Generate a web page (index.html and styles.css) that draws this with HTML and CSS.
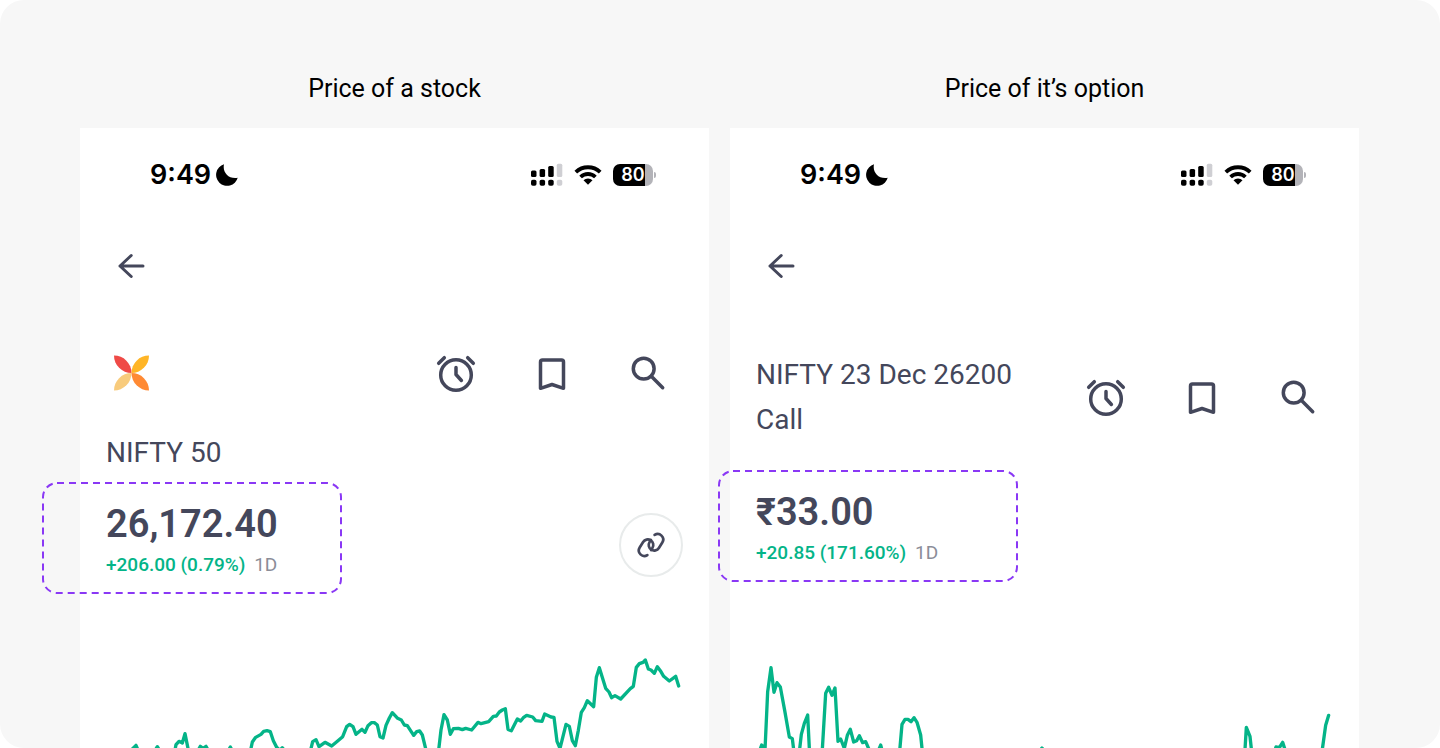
FILE: index.html
```html
<!DOCTYPE html>
<html lang="en">
<head>
	<meta charset="UTF-8" />
	<meta name="viewport" content="width=device-width, initial-scale=1" />
	<title>Stock price and option price</title>
	<link rel="stylesheet" href="styles.css">
</head>
<body>
	<!-- shared icons -->
	<svg class="sprite" aria-hidden="true">
		<symbol id="moon" viewBox="0 0 22 22">
			<path d="M8 .3C6.200 8 12.500 15.500 21.700 13.800A11 11 0 1 1 8 .3z" fill="#000" />
		</symbol>
		<symbol id="signal" viewBox="0 0 32 24">
			<g fill="#000">
				<rect x="0" y="7.500" width="5.500" height="6.500" rx="1.500" />
				<rect x="8.600" y="6" width="5.500" height="8" rx="1.500" />
				<rect x="17.200" y="3" width="5.500" height="11" rx="1.500" />
				<rect x="0" y="16.800" width="5.500" height="6" rx="1.800" />
				<rect x="8.600" y="16.800" width="5.500" height="6" rx="1.800" />
				<rect x="17.200" y="16.800" width="5.500" height="6" rx="1.800" />
			</g>
			<g fill="#cfcfd3">
				<rect x="25.800" y=".8" width="5.500" height="13.200" rx="1.500" />
				<rect x="25.800" y="16.800" width="5.500" height="6" rx="1.800" />
			</g>
		</symbol>
		<symbol id="wifi" viewBox="0 0 28 22">
			<path d="M1.800 8.200A17.500 17.500 0 0 1 26.200 8.200M6.600 13A10.600 10.600 0 0 1 21.400 13" fill="none" stroke="#000" stroke-width="3.800" />
			<path d="M14 20.800L9.500 16.200A6.600 6.600 0 0 1 18.500 16.200z" fill="#000" />
		</symbol>
		<symbol id="back" viewBox="0 0 50 40">
			<path d="M37 20H14M25.200 9.500L14 20L25.200 30.500" />
		</symbol>
		<symbol id="alarm" viewBox="0 0 48 42">
			<circle cx="24" cy="23" r="15.300" />
			<path d="M24 15.500V22.500L29.400 28.500M6.700 11.300L12.300 5.700M41.300 11.300L35.700 5.700" />
		</symbol>
		<symbol id="bookmark" viewBox="0 0 48 42">
			<path d="M14.500 8H33.500Q35.500 8 35.500 10V36.300L24 32.500L12.500 36.300V10Q12.500 8 14.500 8z" />
		</symbol>
		<symbol id="search" viewBox="0 0 48 42">
			<circle cx="19.700" cy="16.700" r="10.400" />
			<path d="M27.300 24.300L38.700 35.700" />
		</symbol>
	</svg>

	<main class="page">
		<!-- stock -->
		<figure class="column">
			<figcaption class="caption">Price of a stock</figcaption>
			<div class="screen">
				<div class="status">
					<span class="time">9:49</span>
					<svg class="moon"><use href="#moon" /></svg>
					<svg class="signal"><use href="#signal" /></svg>
					<svg class="wifi"><use href="#wifi" /></svg>
					<span class="battery">80</span>
				</div>
				<button class="back" type="button" aria-label="Back"><svg class="icon"><use href="#back" /></svg></button>
				<div class="toolbar">
					<svg class="logo" viewBox="0 0 50 36">
						<path d="M8 .5A17.500 17.500 0 0 1 25.500 18A17.500 17.500 0 0 1 8 .5z" fill="#ef4a47" />
						<path d="M43 .5A17.500 17.500 0 0 1 25.500 18A17.500 17.500 0 0 1 43 .5z" fill="#ffb526" />
						<path d="M8 35.500A17.500 17.500 0 0 1 25.500 18A17.500 17.500 0 0 1 8 35.500z" fill="#f8cb7c" />
						<path d="M43 35.500A17.500 17.500 0 0 1 25.500 18A17.500 17.500 0 0 1 43 35.500z" fill="#ff8a34" />
					</svg>
					<div class="actions">
						<button class="action" type="button" aria-label="Set alert"><svg class="icon"><use href="#alarm" /></svg></button>
						<button class="action" type="button" aria-label="Save"><svg class="icon"><use href="#bookmark" /></svg></button>
						<button class="action" type="button" aria-label="Search"><svg class="icon"><use href="#search" /></svg></button>
					</div>
				</div>
				<h2 class="name name-below">NIFTY 50</h2>
				<div class="quote">
					<div class="price">
						<svg class="marker marker-wide"><rect x="1" y="1" width="298" height="110" rx="14" /></svg>
						<p class="value">26,172.40</p>
						<p class="change">+206.00 (0.79%) <span class="period">1D</span></p>
					</div>
					<button class="chain" type="button" aria-label="Option chain">
						<svg class="chain-icon" viewBox="-16 -16 32 32">
							<g transform="translate(-4.800 2.500) rotate(32)"><path d="M5.500 -.5V-3A5.500 5.500 0 0 0 -5.500 -3V3.500A5.500 5.500 0 0 0 5 5.800" /></g>
							<g transform="translate(4.800 -2.500) rotate(212)"><path d="M5.500 -.5V-3A5.500 5.500 0 0 0 -5.500 -3V3.500A5.500 5.500 0 0 0 5 5.800" /></g>
						</svg>
					</button>
				</div>
				<svg class="chart" viewBox="0 0 1887 324">
					<polyline points="154,330 168,316 174,330 200,345 226,330 232,320 238,330 260,345 285,330 288,314 297,304 307,309 315,281 325,330 340,345 356,328 361,319 369,325 378,319 384,330 410,345 445,332 451,321 457,332 490,345 512,330 517,306 527,292 543,283 551,274 561,272 571,275 580,302 590,322 600,331 607,323 614,332 650,350 692,330 698,305 708,299 717,320 735,307 755,318 773,303 788,290 800,260 809,253 819,260 828,283 846,268 855,277 864,257 874,248 883,248 892,255 900,290 909,294 918,256 928,234 937,218 953,235 964,240 973,255 982,257 1001,286 1010,275 1019,273 1027,285 1038,330 1056,370 1076,330 1083,270 1092,224 1102,240 1111,283 1120,266 1135,265 1147,269 1157,265 1175,270 1194,247 1203,251 1226,245 1240,229 1249,228 1258,216 1267,210 1276,206 1284,268 1294,272 1312,237 1322,243 1330,233 1340,226 1358,231 1367,242 1386,244 1394,222 1413,231 1422,232 1431,304 1440,325 1458,253 1468,259 1477,302 1486,317 1495,271 1504,217 1513,203 1522,182 1541,200 1549,112 1558,83 1577,145 1587,156 1595,173 1605,167 1622,177 1651,146 1660,139 1669,82 1678,71 1689,67 1696,60 1705,87 1713,90 1723,100 1732,80 1741,92 1751,109 1768,123 1787,109 1796,138" />
				</svg>
			</div>
		</figure>
		<!-- END of stock -->

		<!-- option -->
		<figure class="column">
			<figcaption class="caption">Price of it’s option</figcaption>
			<div class="screen">
				<div class="status">
					<span class="time">9:49</span>
					<svg class="moon"><use href="#moon" /></svg>
					<svg class="signal"><use href="#signal" /></svg>
					<svg class="wifi"><use href="#wifi" /></svg>
					<span class="battery">80</span>
				</div>
				<button class="back" type="button" aria-label="Back"><svg class="icon"><use href="#back" /></svg></button>
				<div class="toolbar toolbar-tall">
					<h2 class="name">NIFTY 23 Dec 26200 Call</h2>
					<div class="actions">
						<button class="action" type="button" aria-label="Set alert"><svg class="icon"><use href="#alarm" /></svg></button>
						<button class="action" type="button" aria-label="Save"><svg class="icon"><use href="#bookmark" /></svg></button>
						<button class="action" type="button" aria-label="Search"><svg class="icon"><use href="#search" /></svg></button>
					</div>
				</div>
				<div class="quote">
					<div class="price">
						<svg class="marker"><rect x="1" y="1" width="298" height="110" rx="14" /></svg>
						<p class="value">₹33.00</p>
						<p class="change">+20.85 (171.60%) <span class="period">1D</span></p>
					</div>
				</div>
				<svg class="chart" viewBox="0 0 1887 324">
					<polyline points="88,335 95,315 100,322 105,330 113,155 123,83 132,157 141,128 151,141 164,211 178,291 187,296 193,345 207,345 214,283 223,250 233,225 239,345 276,345 287,160 296,142 306,166 315,144 324,304 332,297 343,325 352,286 361,268 371,306 380,302 388,287 398,308 407,305 420,335 440,345 452,315 460,345 508,345 516,253 525,238 534,238 543,245 552,233 561,247 572,285 578,345 750,360 920,345 936,324 950,345 1300,380 1500,360 1544,345 1549,262 1560,289 1566,345 1630,345 1638,321 1648,323 1658,307 1667,335 1740,370 1776,335 1787,256 1796,226" />
				</svg>
			</div>
		</figure>
		<!-- END of option -->
	</main>
</body>
</html>
```
FILE: styles.css
```css
* {
	box-sizing: border-box;
}

body,
figure,
h2,
p {
	margin: 0;
}

body {
	background-color: #fff;
	font-family: Roboto, "Liberation Sans", sans-serif;
	color: #44475b;
}

button {
	padding: 0;
	border: 0;
	background: none;
	cursor: pointer;
}

svg {
	display: block;
	flex-shrink: 0;
}

.sprite {
	position: absolute;
	width: 0;
	height: 0;
}

.page {
	display: grid;
	grid-template-columns: 1fr 1fr;
	column-gap: 21px;
	min-height: 100vh;
	padding: 73px 81px 0 80px;
	border-radius: 24px;
	background-color: #f7f7f7;
}

.column {
	display: flex;
	flex-direction: column;
}

.caption {
	margin-bottom: 23px;
	font-size: 25px;
	line-height: 32px;
	text-align: center;
	color: #000;
}

.screen {
	display: flex;
	flex-direction: column;
	flex: 1;
	padding-top: 32px;
	background-color: #fff;
}

/* phone status bar */
.status {
	display: flex;
	align-items: center;
	height: 30px;
	padding: 0 56px 0 70px;
	font-family: Inter, "Liberation Sans", sans-serif;
	font-weight: 600;
	color: #000;
}

.time {
	font-size: 27px;
	line-height: 30px;
}

.moon {
	width: 22px;
	height: 22px;
	margin-left: 5px;
}

.signal {
	width: 32px;
	height: 24px;
	margin-left: auto;
}

.wifi {
	width: 28px;
	height: 22px;
	margin: 0 11px;
}

.battery {
	position: relative;
	width: 40px;
	height: 22px;
	border-radius: 7px;
	background: linear-gradient(to right, #000 80%, #b3b3b8 80%);
	font-size: 18px;
	line-height: 22px;
	text-align: center;
	color: #fff;
}

.battery::after {
	content: "";
	position: absolute;
	top: 8px;
	right: -3px;
	width: 2px;
	height: 6px;
	border-radius: 0 2px 2px 0;
	background-color: #b3b3b8;
}

/* icon buttons */
.icon {
	width: 100%;
	height: 100%;
	fill: none;
	stroke: #44475b;
	stroke-width: 3.500;
	stroke-linecap: round;
	stroke-linejoin: round;
}

.back {
	width: 50px;
	height: 40px;
	margin: 56px 0 66px 26px;
}

.back .icon {
	stroke-width: 3;
}

.toolbar {
	display: flex;
	align-items: center;
	justify-content: space-between;
	padding: 0 37px 0 26px;
}

.toolbar-tall {
	margin-bottom: 46px;
}

.logo {
	width: 50px;
	height: 36px;
}

.actions {
	display: flex;
	gap: 48px;
}

.action {
	width: 48px;
	height: 42px;
}

.name {
	max-width: 280px;
	font-size: 28px;
	font-weight: 400;
	line-height: 45px;
}

.name-below {
	margin: 36px 26px 25px;
}

/* price */
.quote {
	display: flex;
	align-items: flex-end;
	justify-content: space-between;
	padding: 0 26px;
}

.price {
	position: relative;
}

.value {
	margin-bottom: 5px;
	font-size: 38px;
	font-weight: 600;
	line-height: 48px;
}

.change {
	font-size: 19px;
	font-weight: 500;
	line-height: 24px;
	color: #04b488;
}

.period {
	margin-left: 4px;
	font-weight: 400;
	color: #8b8d98;
}

/* dashed frame round the price */
.marker {
	position: absolute;
	top: -18px;
	left: -38px;
	width: 300px;
	height: 112px;
	fill: none;
	stroke: #8a38f5;
	stroke-width: 2;
	stroke-dasharray: 7 5;
}

.marker-wide {
	left: -64px;
}

.chain {
	display: flex;
	align-items: center;
	justify-content: center;
	width: 64px;
	height: 64px;
	border: 2px solid #e8ebeb;
	border-radius: 50%;
}

.chain-icon {
	width: 32px;
	height: 32px;
	fill: none;
	stroke: #44475b;
	stroke-width: 2.700;
	stroke-linecap: round;
}

.chart {
	width: 100%;
	margin-top: auto;
	fill: none;
	stroke: #04b488;
	stroke-width: 10;
	stroke-linecap: round;
	stroke-linejoin: round;
}
```
